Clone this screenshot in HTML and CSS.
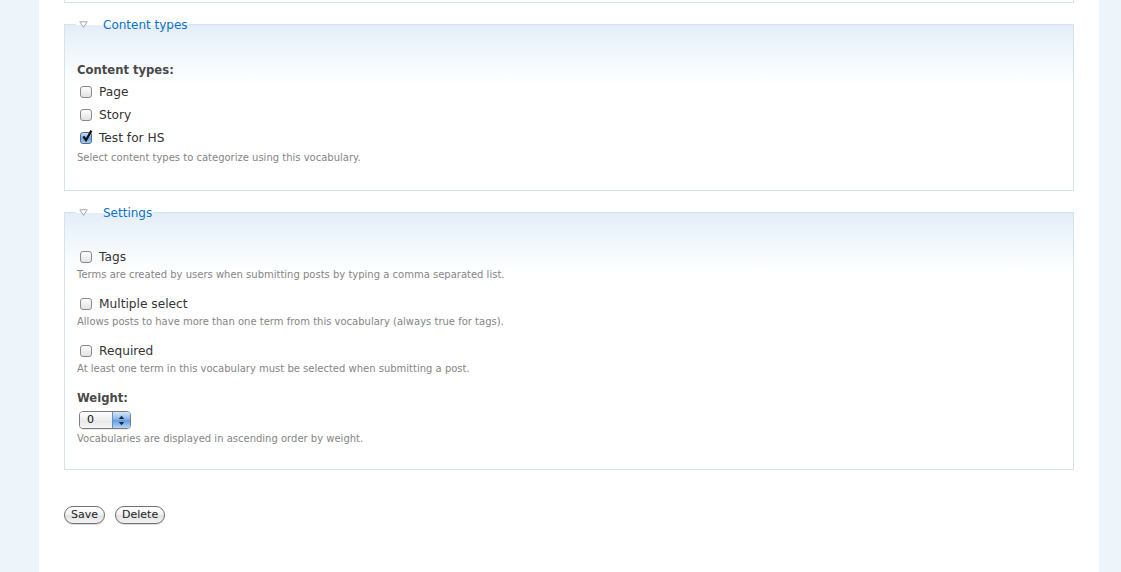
FILE: index.html
```html
<!DOCTYPE html>
<html lang="en">
<head>
    <meta charset="UTF-8">
    <meta name="viewport" content="width=device-width, initial-scale=1.0">
    <title>Edit vocabulary</title>
    <link rel="stylesheet" href="styles.css">
</head>
<body>
    <div class="page">
        <div class="content">
            <div class="prev-fieldset"></div>

            <fieldset class="collapsible types">
                <legend>
                    <svg class="arrow" width="9" height="7" viewBox="0 0 9 7"><path d="M0.8 0.8 H8.2 L4.5 6.3 Z" fill="#fff" stroke="#a6a6a6" stroke-width="1"/></svg>
                    <a href="#">Content types</a>
                </legend>
                <div class="form-item first">
                    <div class="title">Content types:</div>
                    <div class="options">
                        <label class="option"><span class="box"></span>Page</label>
                        <label class="option"><span class="box"></span>Story</label>
                        <label class="option"><span class="box checked"><svg width="13" height="13" viewBox="0 0 13 13"><path d="M2.4 6.4 L5 10.2 L10.4 0.6" fill="none" stroke="#111" stroke-width="2.2"/></svg></span>Test for HS</label>
                    </div>
                    <div class="description">Select content types to categorize using this vocabulary.</div>
                </div>
            </fieldset>

            <fieldset class="collapsible settings">
                <legend>
                    <svg class="arrow" width="9" height="7" viewBox="0 0 9 7"><path d="M0.8 0.8 H8.2 L4.5 6.3 Z" fill="#fff" stroke="#a6a6a6" stroke-width="1"/></svg>
                    <a href="#">Settings</a>
                </legend>
                <div class="form-item first">
                    <label class="option"><span class="box"></span>Tags</label>
                    <div class="description">Terms are created by users when submitting posts by typing a comma separated list.</div>
                </div>
                <div class="form-item">
                    <label class="option"><span class="box"></span>Multiple select</label>
                    <div class="description">Allows posts to have more than one term from this vocabulary (always true for tags).</div>
                </div>
                <div class="form-item">
                    <label class="option"><span class="box"></span>Required</label>
                    <div class="description">At least one term in this vocabulary must be selected when submitting a post.</div>
                </div>
                <div class="form-item">
                    <div class="title">Weight:</div>
                    <div class="select">
                        <span class="select-value">0</span>
                        <span class="select-arrows">
                            <svg width="7" height="11" viewBox="0 0 7 11"><path d="M3.5 0.8 L6.3 4 H0.7 Z M3.5 10.2 L6.3 7 H0.7 Z" fill="#1b2a3c"/></svg>
                        </span>
                    </div>
                    <div class="description">Vocabularies are displayed in ascending order by weight.</div>
                </div>
            </fieldset>

            <div class="buttons">
                <button class="btn">Save</button>
                <button class="btn">Delete</button>
            </div>
        </div>
    </div>
</body>
</html>
```

FILE: styles.css
```css
body{
    margin: 0;
    background-color: #edf5fa;
    font-family: "DejaVu Sans", Verdana, sans-serif;
    color: #494949;
}
.page{
    height: 572px;
    overflow: hidden;
}
.content{
    margin: 0 22px 0 39px;
    padding: 0 25px;
    background-color: #fff;
    height: 100%;
}
.prev-fieldset{
    height: 2px;
    border: 1px solid #d5e3ef;
    border-top: none;
}
fieldset{
    margin: 13px 0 0 0;
    padding: 0 12px 25px 12px;
    border: 1px solid #d5e3ef;
    background: linear-gradient(#e4eef8 0, #f6fafd 40px, #fff 60px);
}
fieldset.settings{
    padding-bottom: 23px;
}
legend{
    padding: 1px 1px 0 3px;
    margin-left: -1px;
    font-size: 12px;
    line-height: 16px;
    display: flex;
    align-items: center;
}
legend .arrow{
    margin: -1px 15px 0 0;
}
legend a{
    color: #0a73c4;
    text-decoration: none;
}
.form-item{
    margin-top: 14px;
}
.form-item.first{
    margin-top: 29px;
}
.settings .form-item.first{
    margin-top: 28px;
}
.title{
    font-weight: bold;
    font-size: 11.6px;
    line-height: 16px;
}
.options{
    margin-top: 6px;
}
.option{
    display: flex;
    align-items: center;
    font-size: 12.2px;
    line-height: 16px;
    color: #333;
    height: 16px;
}
.options .option + .option{
    margin-top: 7px;
}
.box{
    width: 10px;
    height: 10px;
    margin: 0 7px 0 3px;
    border: 1px solid #8a8a8a;
    border-radius: 3px;
    background: linear-gradient(#fdfdfd, #e2e2e2);
    position: relative;
    flex-shrink: 0;
}
.box.checked{
    border-color: #4a6c9b;
    background: linear-gradient(#cfe2f7, #77a5dd 55%, #a8cbf0);
}
.box svg{
    position: absolute;
    left: 0;
    top: -3px;
}
.description{
    margin-top: 2px;
    font-size: 10px;
    line-height: 15px;
    color: #858585;
}
.options + .description{
    margin-top: 4px;
}
.select{
    margin: 5px 0 0 2px;
    width: 50px;
    height: 16px;
    border: 1px solid #7c7c7c;
    border-radius: 4px;
    display: flex;
    overflow: hidden;
    font-size: 11px;
    box-shadow: 0 1px 0 rgba(0,0,0,0.08);
}
.select-value{
    flex: 1;
    padding-left: 7px;
    line-height: 16px;
    color: #111;
    background: linear-gradient(#fff, #e9e9e9 60%, #f6f6f6);
}
.select-arrows{
    width: 17px;
    border-left: 1px solid #6e8cb5;
    display: flex;
    align-items: center;
    justify-content: center;
    background: linear-gradient(#d6e7fa, #7fb0ea 50%, #5e9be3 51%, #b6d5f7);
}
.buttons{
    margin-top: 36px;
    display: flex;
    gap: 10px;
}
.btn{
    height: 18px;
    padding: 0 6px;
    font-family: "DejaVu Sans", Verdana, sans-serif;
    font-size: 11px;
    line-height: 16px;
    color: #222;
    border: 1px solid #707070;
    border-radius: 9px;
    background: linear-gradient(#ffffff, #f1f1f1 50%, #e2e2e2 51%, #f3f3f3);
    box-shadow: 0 1px 1px rgba(0,0,0,0.15);
}
```
